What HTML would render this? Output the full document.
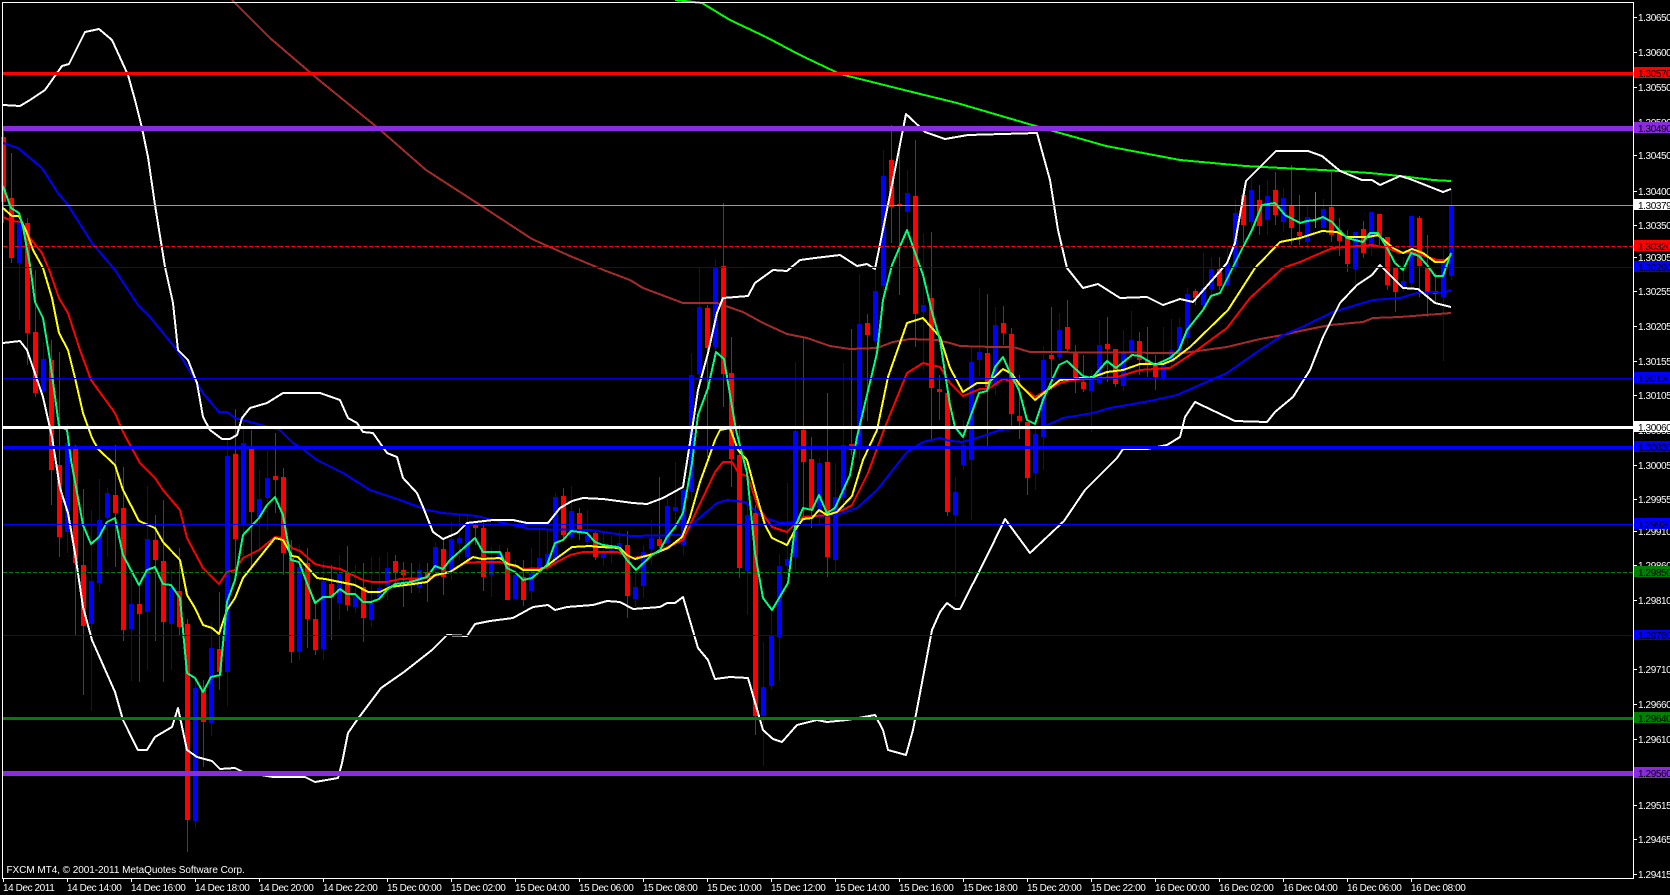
<!DOCTYPE html>
<html><head><meta charset="utf-8"><title>FXCM MT4</title>
<style>
html,body{margin:0;padding:0;background:#000;width:1670px;height:895px;overflow:hidden}
svg{display:block;position:absolute;left:0;top:0}
text{font-family:"Liberation Sans",sans-serif;font-size:10px;letter-spacing:-.4px;fill:#fff}
.t{letter-spacing:-.42px}
.k{fill:#000}
polyline{fill:none;stroke-width:2;stroke-linejoin:round}
</style></head><body>
<svg width="1670" height="895" viewBox="0 0 1670 895" xmlns="http://www.w3.org/2000/svg" shape-rendering="crispEdges">
<rect width="1670" height="895" fill="#000"/>
<!-- wicks -->
<path fill="none" stroke="#dd0000" stroke-width="1" d="M3.5 128V223M11.5 153V263M27.5 218V365M35.5 270V397M51.5 340V505M59.5 352V557M75.5 445V635M83.5 489V695M115.5 445V567M123.5 467V641M139.5 585V682M155.5 515V641M163.5 500V682M179.5 548V635M187.5 619V852M203.5 680V767M219.5 592V690M235.5 409V575M251.5 430V570M275.5 433V513M283.5 468V575M291.5 540V663M307.5 548V648M315.5 600V655M331.5 565V640M347.5 546V611M363.5 563V642M395.5 555V587M403.5 562V607M411.5 563V593M427.5 563V602M443.5 540V595M475.5 521V545M483.5 522V591M507.5 548V600M523.5 560V606M563.5 488V540M579.5 508V540M595.5 530V560M627.5 531V618M659.5 477V548M707.5 305V457M723.5 203V407M731.5 337V487M739.5 425V578M755.5 505V735M803.5 338V520M811.5 437V528M827.5 393V577M851.5 329V455M867.5 314V421M891.5 125V243M899.5 150V295M915.5 140V347M931.5 232V440M939.5 375V420M947.5 393V516M987.5 294V446M1003.5 306V345M1011.5 328V430M1019.5 375V439M1027.5 422V495M1051.5 307V390M1067.5 300V353M1075.5 345V393M1083.5 355V392M1107.5 317V382M1115.5 349V387M1139.5 332V375M1147.5 327V377M1155.5 355V390M1195.5 289V305M1219.5 257V290M1243.5 188V243M1259.5 185V235M1275.5 172V225M1291.5 165V245M1299.5 195V245M1331.5 170V242M1339.5 218V256M1347.5 230V272M1363.5 221V258M1379.5 214V245M1387.5 237V290M1395.5 267V312M1419.5 216V297M1427.5 235V317M1435.5 273V302"/>
<path fill="none" stroke="#0000dd" stroke-width="1" d="M19.5 222V320M43.5 342V393M67.5 424V553M91.5 510V711M99.5 479V592M107.5 488V557M131.5 573V681M147.5 486V670M171.5 570V670M195.5 680V828M211.5 622V736M227.5 440V706M243.5 409V560M259.5 470V550M267.5 450V530M299.5 545V660M323.5 561V660M339.5 555V620M355.5 565V613M371.5 557V627M379.5 557V600M387.5 552V600M419.5 563V593M435.5 542V577M451.5 522V580M459.5 515V560M467.5 515V565M491.5 547V597M499.5 545V565M515.5 560V599M531.5 548V600M539.5 530V570M547.5 530V570M555.5 493V565M571.5 486V540M587.5 510V545M603.5 533V566M611.5 535V563M619.5 531V555M635.5 570V607M643.5 545V598M651.5 520V565M667.5 498V550M675.5 462V530M683.5 465V555M691.5 353V500M699.5 267V400M715.5 259V362M747.5 500V615M763.5 642V766M771.5 610V690M779.5 554V681M787.5 483V575M795.5 362V570M819.5 458V525M835.5 463V572M843.5 363V510M859.5 274V460M875.5 267V373M883.5 150V300M907.5 170V247M923.5 233V370M955.5 477V597M963.5 420V470M971.5 347V520M979.5 288V376M995.5 307V395M1035.5 425V490M1043.5 346V470M1059.5 313V360M1091.5 370V432M1099.5 320V385M1123.5 330V391M1131.5 311V360M1163.5 327V381M1171.5 319V370M1179.5 318V360M1187.5 288V345M1203.5 253V310M1211.5 257V295M1227.5 248V290M1235.5 200V272M1251.5 178V235M1267.5 180V235M1283.5 188V232M1307.5 205V250M1323.5 199V235M1355.5 232V285M1371.5 212V256M1403.5 257V292M1411.5 216V290M1443.5 245V361M1451.5 190V280"/>
<path fill="none" stroke="#00cc00" stroke-width="1" d="M1315.5 192V228"/>
<!-- bodies -->
<path fill="none" stroke="#ff0000" stroke-width="5" d="M3.5 137V202M11.5 198V258M27.5 223V333M35.5 332V393M51.5 360V470M59.5 465V537M75.5 448V563M83.5 565V626M115.5 495V513M123.5 508V630M139.5 604V614M155.5 540V560M163.5 561V622M179.5 591V627M187.5 624V820M203.5 690V722M219.5 649V672M235.5 454V539M251.5 449V512M275.5 476V480M283.5 477V553M291.5 558V652M307.5 563V619M315.5 619V650M331.5 584V597M347.5 573V605M363.5 587V618M395.5 561V573M403.5 570V575M411.5 578V583M427.5 572V577M443.5 549V577M475.5 525V528M483.5 528V577M507.5 552V600M523.5 577V600M563.5 496V535M579.5 513V533M595.5 533V557M627.5 545V596M659.5 539V546M707.5 308V348M723.5 266V374M731.5 373V459M739.5 455V568M755.5 513V716M803.5 430V462M811.5 459V510M827.5 462V557M851.5 444V450M867.5 323V335M891.5 160V207M899.5 204V206M915.5 196V314M931.5 298V388M939.5 389V392M947.5 393V512M987.5 353V387M1003.5 323V333M1011.5 334V414M1019.5 416V421M1027.5 422V478M1051.5 355V359M1067.5 327V349M1075.5 352V377M1083.5 382V389M1107.5 344V349M1115.5 349V384M1139.5 341V360M1147.5 360V365M1155.5 363V377M1195.5 291V298M1219.5 269V286M1243.5 195V225M1259.5 200V226M1275.5 190V215M1291.5 205V228M1299.5 232V236M1331.5 207V235M1339.5 230V241M1347.5 237V264M1363.5 229V253M1379.5 214V237M1387.5 237V285M1395.5 267V292M1419.5 218V266M1427.5 267V292M1435.5 291V294"/>
<path fill="none" stroke="#0000ff" stroke-width="5" d="M19.5 222V263M43.5 359V391M67.5 443V532M91.5 581V624M99.5 520V583M107.5 493V518M131.5 604V629M147.5 539V612M171.5 588V624M195.5 688V821M211.5 648V723M227.5 456V672M243.5 443V525M259.5 499V517M267.5 478V498M299.5 567V652M323.5 581V649M339.5 574V603M355.5 597V607M371.5 603V620M379.5 588V597M387.5 568V586M419.5 570V588M435.5 547V570M451.5 539V572M459.5 538V543M467.5 526V557M491.5 560V575M499.5 552V560M515.5 575V599M531.5 573V591M539.5 558V568M547.5 554V567M555.5 497V563M571.5 511V537M587.5 535V542M603.5 553V558M611.5 550V552M619.5 543V550M635.5 587V599M643.5 552V586M651.5 538V549M667.5 506V543M675.5 507V511M683.5 490V545M691.5 375V492M699.5 307V374M715.5 267V347M747.5 515V571M763.5 687V716M771.5 635V686M779.5 566V637M787.5 559V566M795.5 431V557M819.5 463V510M835.5 497V560M843.5 445V497M859.5 324V445M875.5 291V341M883.5 176V286M907.5 193V212M923.5 305V312M955.5 492V515M963.5 445V465M971.5 362V460M979.5 352V360M995.5 325V386M1035.5 434V473M1043.5 360V437M1059.5 330V357M1091.5 378V391M1099.5 345V383M1123.5 353V386M1131.5 340V353M1163.5 363V378M1171.5 350V362M1179.5 327V352M1187.5 294V338M1203.5 288V305M1211.5 269V289M1227.5 263V285M1235.5 213V268M1251.5 190V222M1267.5 196V220M1283.5 198V222M1307.5 217V242M1323.5 209V228M1355.5 232V269M1371.5 212V247M1403.5 281V288M1411.5 216V283M1443.5 263V297M1451.5 205V276"/>
<!-- brown MA -->
<polyline stroke="#a52a2a" points="232,0 270,38 319,80 378,128 426,170 480,205 532,239 570,256 606,271 630,280 643,288 683,303 717,303 743,312 763,323 787,334 807,338 830,346 850,349 877,348 893,342 910,339 937,340 950,343 960,346 993,347 1013,347 1030,352 1183,353 1227,347 1260,339 1283,335 1300,331 1330,325 1363,322 1373,318 1400,317 1451,313"/>
<!-- lime SMA -->
<polyline stroke="#00ff00" points="675,0 702,3 730,20 766,37 800,55 840,74 904,90 957,103 1032,125 1106,146 1180,160 1245,166 1300,169 1323,170 1370,173 1400,176 1433,180 1451,181"/>
<!-- blue MA -->
<polyline stroke="#0000ff" points="3,143 18,148 42,168 58,193 68,205 92,243 115,270 138,305 150,317 177,350 203,393 219,412 227,412 235,418 250,422 280,430 293,443 300,447 317,460 343,473 370,490 400,500 427,510 443,513 477,516 500,522 530,529 590,530 630,536 683,535 697,520 717,503 727,500 745,502 763,517 780,523 790,523 803,517 837,515 857,508 877,490 907,452 923,442 940,438 950,441 963,442 980,437 1000,430 1043,427 1063,418 1093,413 1110,408 1150,401 1177,395 1227,373 1257,352 1283,335 1300,328 1333,312 1373,300 1400,298 1417,293 1433,292 1443,293 1451,290"/>
<!-- Bollinger -->
<polyline stroke="#ffffff" points="3,105 20,106 30,100 45,90 62,66 69,64 85,32 99,29 112,40 128,75 135,100 142,128 148,157 155,205 165,267 173,303 178,350 188,360 197,383 203,417 210,430 222,439 230,439 237,435 242,418 250,408 267,403 283,393 300,393 320,393 340,400 348,418 357,423 363,432 373,433 387,453 397,457 403,478 417,493 423,507 433,532 443,539 457,533 467,523 493,520 513,520 527,523 548,523 560,508 572,501 583,498 603,499 633,503 647,504 663,498 683,487 692,430 698,390 708,353 717,313 723,298 748,296 755,283 773,270 787,271 800,260 815,258 840,255 857,266 867,264 875,269 893,180 906,114 925,132 945,139 968,135 1037,133 1050,180 1058,230 1067,268 1083,288 1098,284 1120,298 1147,297 1163,305 1180,299 1193,302 1227,263 1235,243 1246,181 1276,151 1300,151 1308,151 1322,156 1340,171 1362,180 1372,180 1380,185 1400,176 1410,179 1443,192 1451,189"/>
<polyline stroke="#ffffff" points="3,343 20,341 27,350 43,397 52,437 60,488 68,513 75,553 83,607 92,640 115,692 123,720 138,750 147,750 155,737 172,727 178,708 187,750 197,757 212,761 220,769 235,768 243,772 273,777 293,777 305,777 315,782 338,778 342,763 348,733 357,720 381,688 404,672 432,650 447,635 467,636 475,624 490,621 513,618 533,607 548,605 555,610 567,607 593,605 607,601 620,602 633,609 660,607 667,603 675,603 683,597 698,648 708,660 715,679 730,677 748,678 763,730 773,739 782,742 797,725 817,720 827,722 847,720 875,715 883,730 888,750 906,755 913,730 932,630 940,612 947,603 955,609 960,609 985,560 1005,519 1030,553 1064,521 1085,490 1117,458 1123,449 1147,449 1167,445 1180,437 1185,417 1195,402 1235,421 1267,422 1275,412 1293,397 1310,370 1323,337 1340,303 1357,285 1372,275 1380,265 1388,273 1403,288 1418,289 1435,303 1451,307"/>
<!-- red MA -->
<polyline stroke="#ff0000" points="3,217 12,221 22,222 30,238 42,253 50,272 59,298 68,313 80,350 91,380 115,413 123,432 140,463 155,478 163,490 180,510 187,538 203,568 219,584 227,572 235,570 243,558 259,550 275,537 283,538 292,548 300,551 315,564 323,566 340,569 363,580 372,582 387,582 400,579 427,578 450,572 465,563 480,562 500,562 517,567 523,569 547,568 557,562 570,555 583,552 617,552 633,558 650,555 683,540 697,510 715,472 723,462 732,462 738,472 748,477 758,507 772,527 787,532 797,522 803,517 827,515 843,510 852,505 868,473 885,427 907,373 923,363 940,367 950,383 963,396 980,389 988,389 1003,379 1015,382 1035,397 1060,383 1073,380 1117,377 1140,370 1170,368 1193,353 1227,328 1250,298 1283,268 1300,262 1323,252 1333,248 1372,245 1387,248 1400,253 1412,252 1428,257 1437,260 1445,260 1451,256"/>
<!-- yellow MA -->
<polyline stroke="#ffff00" points="3,208 12,216 19,216 27,233 33,250 43,268 52,298 59,333 68,350 75,378 83,413 92,438 98,449 115,465 123,490 139,521 155,528 163,542 180,560 187,595 195,608 203,625 212,628 219,634 227,610 235,598 243,578 275,538 283,540 292,556 298,557 317,578 325,579 340,582 355,585 368,592 380,592 390,587 413,584 427,582 435,575 450,572 473,557 482,559 500,558 508,564 517,566 523,570 540,570 548,565 557,558 572,547 590,546 600,547 620,548 627,555 635,559 653,554 668,548 682,537 690,517 700,482 708,460 715,440 720,430 730,428 738,450 747,460 755,490 765,525 772,538 787,545 795,530 803,519 812,518 819,510 827,515 837,512 852,496 863,460 877,430 888,377 907,323 923,318 940,337 950,368 963,392 977,383 988,383 1003,369 1012,374 1020,385 1035,400 1060,380 1093,377 1107,372 1123,370 1140,364 1163,364 1173,360 1190,347 1228,310 1255,268 1280,242 1300,238 1322,231 1337,232 1347,237 1368,237 1378,235 1393,248 1403,253 1412,249 1423,253 1435,262 1444,262 1451,255"/>
<!-- fast MA -->
<polyline stroke="#00ff7f" points="3,186 11,208 19,213 23,227 30,265 35,302 43,318 50,360 59,426 67,430 71,460 83,525 91,544 99,537 107,522 115,518 123,555 139,585 147,570 155,567 163,584 171,585 180,598 187,673 195,678 203,692 211,677 220,675 227,602 235,580 243,535 259,518 267,505 275,497 283,515 291,560 299,562 307,583 315,603 323,597 331,597 340,589 347,594 355,594 363,602 371,602 379,599 387,590 395,584 411,582 427,577 435,566 443,569 450,560 475,538 483,552 500,552 507,568 515,572 523,580 532,578 547,565 555,543 563,540 571,531 587,533 595,542 603,545 618,547 627,560 636,570 652,555 660,550 667,537 675,527 683,513 692,463 698,415 708,388 716,352 724,359 736,430 747,473 755,553 763,598 772,610 788,583 795,527 803,508 812,510 819,495 827,513 835,508 850,475 857,437 877,353 883,300 892,265 907,230 923,275 932,312 940,340 950,405 955,427 963,437 972,412 979,393 987,391 995,367 1003,357 1012,377 1019,390 1027,420 1035,424 1043,400 1052,380 1059,365 1067,361 1083,376 1092,378 1107,361 1116,368 1132,355 1140,356 1155,365 1170,358 1179,350 1187,330 1203,310 1211,296 1220,293 1228,277 1243,247 1252,230 1262,205 1275,203 1285,215 1300,223 1307,221 1315,220 1323,217 1332,222 1339,230 1347,238 1363,242 1370,233 1378,233 1387,248 1395,263 1403,270 1411,253 1419,256 1427,265 1435,276 1443,276 1451,253"/>
<!-- horizontal lines -->
<rect x="3" y="72" width="1630" height="3" fill="#ff0000"/>
<rect x="3" y="126" width="1630" height="5" fill="#8a2be2"/>
<rect x="3" y="205" width="1630" height="1" fill="#999999"/>
<path d="M3 246.5H1633" stroke="#ff0000" stroke-width="1" stroke-dasharray="4 2" fill="none"/>
<rect x="3" y="267" width="1630" height="1" fill="#0000dd"/>
<rect x="3" y="378" width="1630" height="1" fill="#0000dd"/>
<rect x="3" y="426" width="1630" height="3" fill="#ffffff"/>
<rect x="3" y="446" width="1630" height="3" fill="#0000ff"/>
<rect x="3" y="524" width="1630" height="1" fill="#0000ff"/>
<path d="M3 572.5H1633" stroke="#008000" stroke-width="1" stroke-dasharray="4 2" fill="none"/>
<rect x="3" y="635" width="1630" height="1" fill="#0000dd"/>
<rect x="3" y="717" width="1630" height="3" fill="#008000"/>
<rect x="3" y="771" width="1630" height="5" fill="#8a2be2"/>
<!-- frame -->
<path d="M2.5 2.5H1633.5V878.5H2.5Z" fill="none" stroke="#fff" stroke-width="1"/>
<text x="6.5" y="873" style="letter-spacing:-.05px">FXCM MT4, © 2001-2011 MetaQuotes Software Corp.</text>
<!-- price ticks -->
<path stroke="#fff" stroke-width="1" d="M1634 17.5h3M1634 52.5h3M1634 87.5h3M1634 122.5h3M1634 155.5h3M1634 191.5h3M1634 225.5h3M1634 257.5h3M1634 291.5h3M1634 326.5h3M1634 361.5h3M1634 395.5h3M1634 430.5h3M1634 465.5h3M1634 499.5h3M1634 531.5h3M1634 565.5h3M1634 600.5h3M1634 669.5h3M1634 704.5h3M1634 739.5h3M1634 805.5h3M1634 839.5h3M1634 874.5h3"/>
<text x="1638" y="21">1.30650</text><text x="1638" y="56">1.30600</text><text x="1638" y="91">1.30550</text><text x="1638" y="126">1.30500</text><text x="1638" y="159">1.30450</text><text x="1638" y="195">1.30400</text><text x="1638" y="229">1.30350</text><text x="1638" y="261">1.30305</text><text x="1638" y="295">1.30255</text><text x="1638" y="330">1.30205</text><text x="1638" y="365">1.30155</text><text x="1638" y="399">1.30105</text><text x="1638" y="434">1.30055</text><text x="1638" y="469">1.30005</text><text x="1638" y="503">1.29955</text><text x="1638" y="535">1.29910</text><text x="1638" y="569">1.29860</text><text x="1638" y="604">1.29810</text><text x="1638" y="673">1.29710</text><text x="1638" y="708">1.29660</text><text x="1638" y="743">1.29610</text><text x="1638" y="809">1.29515</text><text x="1638" y="843">1.29465</text><text x="1638" y="878">1.29415</text>
<!-- tags -->
<rect x="1634" y="67" width="36" height="11" fill="#ff0000"/><text class="k" x="1638" y="77">1.30570</text>
<rect x="1634" y="122" width="36" height="11" fill="#8a2be2"/><text class="k" x="1638" y="132">1.30490</text>
<rect x="1634" y="199" width="36" height="11" fill="#ffffff"/><text class="k" x="1638" y="209">1.30379</text>
<rect x="1634" y="240" width="36" height="11" fill="#ff0000"/><text class="k" x="1638" y="250">1.30320</text>
<rect x="1634" y="261" width="36" height="11" fill="#0000ff"/><text class="k" x="1638" y="271">1.30290</text>
<rect x="1634" y="372" width="36" height="11" fill="#0000ff"/><text class="k" x="1638" y="382">1.30130</text>
<rect x="1634" y="421" width="36" height="11" fill="#ffffff"/><text class="k" x="1638" y="431">1.30060</text>
<rect x="1634" y="441" width="36" height="11" fill="#0000ff"/><text class="k" x="1638" y="451">1.30030</text>
<rect x="1634" y="518" width="36" height="11" fill="#0000ff"/><text class="k" x="1638" y="528">1.29920</text>
<rect x="1634" y="566" width="36" height="11" fill="#008000"/><text class="k" x="1638" y="576">1.29850</text>
<rect x="1634" y="630" width="36" height="10" fill="#0000ff"/><text class="k" x="1638" y="639">1.29760</text>
<rect x="1634" y="712" width="36" height="11" fill="#008000"/><text class="k" x="1638" y="722">1.29640</text>
<rect x="1634" y="767" width="36" height="11" fill="#8a2be2"/><text class="k" x="1638" y="777">1.29560</text>
<!-- time ticks -->
<path stroke="#fff" stroke-width="1" d="M3.5 879v3M67.5 879v3M131.5 879v3M195.5 879v3M259.5 879v3M323.5 879v3M387.5 879v3M451.5 879v3M515.5 879v3M579.5 879v3M643.5 879v3M707.5 879v3M771.5 879v3M835.5 879v3M899.5 879v3M963.5 879v3M1027.5 879v3M1091.5 879v3M1155.5 879v3M1219.5 879v3M1283.5 879v3M1347.5 879v3M1411.5 879v3"/>
<text class="t" x="3" y="891">14 Dec 2011</text><text class="t" x="67" y="891">14 Dec 14:00</text><text class="t" x="131" y="891">14 Dec 16:00</text><text class="t" x="195" y="891">14 Dec 18:00</text><text class="t" x="259" y="891">14 Dec 20:00</text><text class="t" x="323" y="891">14 Dec 22:00</text><text class="t" x="387" y="891">15 Dec 00:00</text><text class="t" x="451" y="891">15 Dec 02:00</text><text class="t" x="515" y="891">15 Dec 04:00</text><text class="t" x="579" y="891">15 Dec 06:00</text><text class="t" x="643" y="891">15 Dec 08:00</text><text class="t" x="707" y="891">15 Dec 10:00</text><text class="t" x="771" y="891">15 Dec 12:00</text><text class="t" x="835" y="891">15 Dec 14:00</text><text class="t" x="899" y="891">15 Dec 16:00</text><text class="t" x="963" y="891">15 Dec 18:00</text><text class="t" x="1027" y="891">15 Dec 20:00</text><text class="t" x="1091" y="891">15 Dec 22:00</text><text class="t" x="1155" y="891">16 Dec 00:00</text><text class="t" x="1219" y="891">16 Dec 02:00</text><text class="t" x="1283" y="891">16 Dec 04:00</text><text class="t" x="1347" y="891">16 Dec 06:00</text><text class="t" x="1411" y="891">16 Dec 08:00</text>
</svg>
</body></html>
